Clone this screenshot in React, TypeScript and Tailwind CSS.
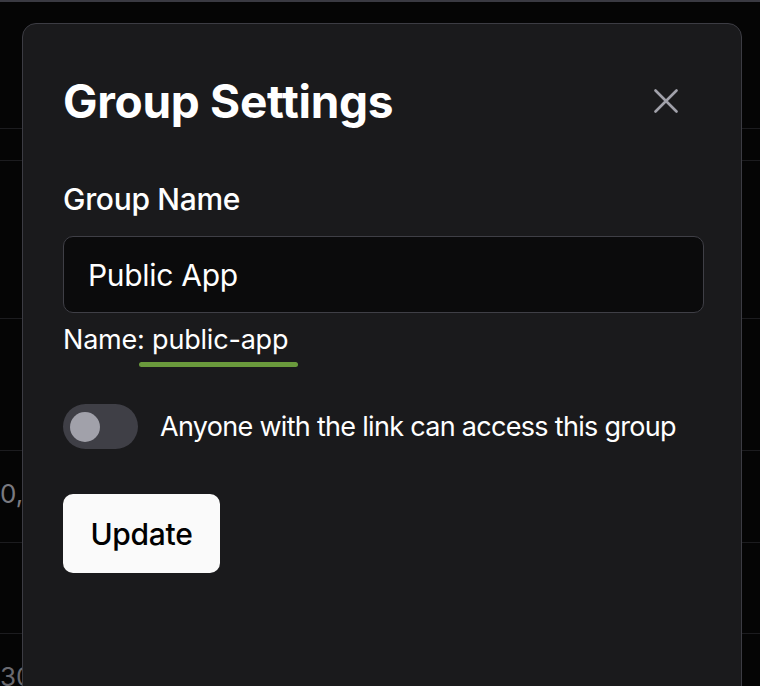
const rowLines = [127, 160, 319, 452, 545, 637];

function Backdrop() {
  // table rows peeking out behind the dialog
  let prev = 0;
  return (
    <div className="flex flex-col">
      {rowLines.map((y, i) => {
        const h = y - prev;
        prev = y + 1;
        return (
          <div key={i} className="border-b border-[#1c1c1f]" style={{ height: h }}>
            {i === 4 && (
              <div className="pt-[30px] text-[26px] leading-none text-[#7a7a80]">0,</div>
            )}
          </div>
        );
      })}
      <div className="pt-[30px] text-[26px] leading-none text-[#6a6a70]">30</div>
    </div>
  );
}

function CloseIcon() {
  return (
    <svg width="24" height="24" viewBox="0 0 24 24" fill="none" stroke="currentColor" strokeWidth="2.6" strokeLinecap="round">
      <path d="M1.5 1.5L22.5 22.5M22.5 1.5L1.5 22.5" />
    </svg>
  );
}

export default function App() {
  return (
    <div
      className="relative h-[686px] w-[760px] overflow-hidden border-t-2 border-[#3a3a42] bg-[#050505]"
      style={{ fontFamily: 'Inter, "Noto Sans", sans-serif' }}
    >
      <Backdrop />

      <div className="absolute left-[22px] top-[21px] h-[720px] w-[720px] rounded-[14px] border border-[#3c3c43] bg-[#1a1a1c] px-[40px] pt-[54px]">
        <div className="flex items-center justify-between">
          <h2 className="text-[46px] font-bold leading-none tracking-[-0.3px] text-white">Group Settings</h2>
          <button className="mr-[23px] text-[#a1a1aa]">
            <CloseIcon />
          </button>
        </div>

        <div className="mt-[60px] text-[30px] font-medium leading-none tracking-[-0.3px] text-white">Group Name</div>
        <div className="mt-[22px] flex h-[77px] w-[641px] items-center rounded-[10px] border border-[#3f3f46] bg-[#0b0b0c] px-[24px] text-[30px] leading-none tracking-[-0.3px] text-white">
          Public App
        </div>
        <div className="mt-[13px] text-[27px] leading-none tracking-[-0.2px] text-white">
          Name:{' '}
          <span className="relative inline-block">
            public-app
            <span className="absolute -bottom-[14px] -left-[13px] h-[5px] w-[159px] rounded-full bg-[#6a9a3c]" />
          </span>
        </div>

        <div className="mt-[51px] flex items-center gap-[22px]">
          <div className="flex h-[45px] w-[75px] items-center rounded-full bg-[#3f3f46] px-[7px]">
            <div className="h-[30px] w-[30px] rounded-full bg-[#a1a1aa]" />
          </div>
          <span className="text-[27px] leading-none tracking-[-0.7px] text-white">Anyone with the link can access this group</span>
        </div>

        <button className="mt-[45px] flex h-[79px] w-[157px] items-center justify-center rounded-[10px] bg-[#fafafa] text-[30px] font-medium leading-none tracking-[-0.3px] text-black">
          Update
        </button>
      </div>
    </div>
  );
}
